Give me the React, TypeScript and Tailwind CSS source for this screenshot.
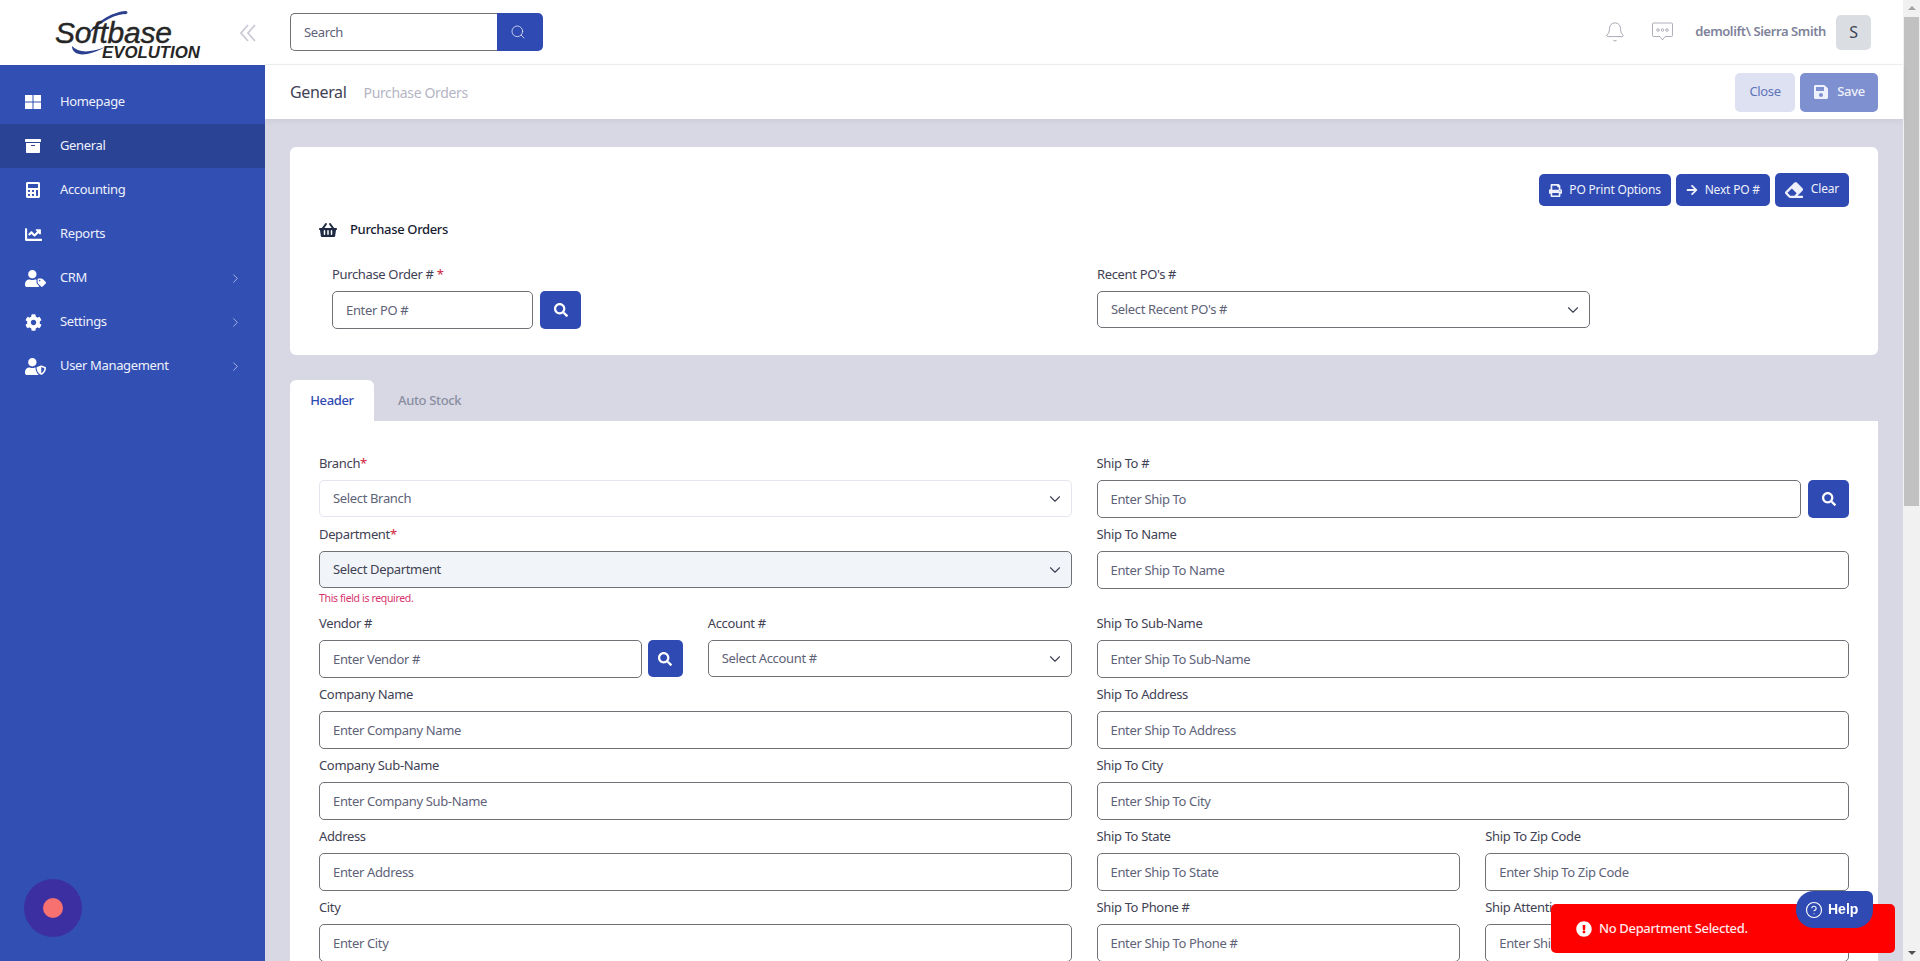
import { Bell, ChevronDown, ChevronRight, CircleHelp, Search } from "lucide-react";
import {
  FaArchive,
  FaArrowRight,
  FaCalculator,
  FaChartLine,
  FaCog,
  FaEraser,
  FaExclamationCircle,
  FaPrint,
  FaSave,
  FaSearch,
  FaShoppingBasket,
  FaUserShield,
  FaUserTag,
} from "react-icons/fa";
import type { ReactNode } from "react";

const HomeIcon = () => (
  <svg width="16" height="14" viewBox="0 0 16 14" fill="currentColor">
    <rect x="0" y="0" width="7.5" height="6.5" />
    <rect x="8.5" y="0" width="7.5" height="6.5" />
    <rect x="0" y="7.5" width="7.5" height="6.5" />
    <rect x="8.5" y="7.5" width="7.5" height="6.5" />
  </svg>
);

const menu = [
  { label: "Homepage", icon: <HomeIcon /> },
  { label: "General", icon: <FaArchive size={16} />, active: true },
  { label: "Accounting", icon: <FaCalculator size={16} /> },
  { label: "Reports", icon: <FaChartLine size={17} /> },
  { label: "CRM", icon: <FaUserTag size={21} />, more: true },
  { label: "Settings", icon: <FaCog size={17} />, more: true },
  { label: "User Management", icon: <FaUserShield size={21} />, more: true },
];

const Logo = () => (
  <div className="relative h-[65px] w-[239px] shrink-0">
    <svg className="absolute left-0 top-0" width="225" height="65" viewBox="0 0 225 65" fill="none">
      <path d="M86 37 C94 24 110 12 126 11 C129 12 127 15 124 14 C110 16 98 24 86 37 Z" fill="#2b3f8f" />
      <path d="M72 46 C72 57 88 57 105 47 C90 53 78 53 72 46 Z" fill="#2b3f8f" />
    </svg>
    <span className="absolute left-[55px] top-[20px] font-['Liberation_Sans',sans-serif] text-[30px] italic leading-[26px] tracking-[-0.2px] text-[#262626] [-webkit-text-stroke:0.4px_#262626]">
      Softbase
    </span>
    <span className="absolute left-[102px] top-[47px] font-['Liberation_Sans',sans-serif] text-[16.8px] font-bold italic leading-[12px] tracking-normal text-[#262626]">
      EVOLUTION
    </span>
  </div>
);

const Sidebar = () => (
  <aside className="flex w-[265px] shrink-0 flex-col bg-[#324fb4]">
    <div className="flex h-[65px] items-center bg-white">
      <Logo />
      <svg width="18" height="18" viewBox="0 0 18 18" fill="none" stroke="#c9cad6" strokeWidth="1.8">
        <path d="M9 1 L2 9 L9 17" />
        <path d="M16 1 L9 9 L16 17" />
      </svg>
    </div>
    <nav className="flex flex-1 flex-col pt-[15px]">
      {menu.map((item) => (
        <div
          key={item.label}
          className={
            item.active
              ? "flex h-11 items-center bg-[#2b4394] pl-[25px] pr-[22px] text-[13px] text-[#eef1fb]"
              : "flex h-11 items-center pl-[25px] pr-[22px] text-[13px] text-[#eef1fb]"
          }
        >
          <span className="flex w-[35px] text-white">{item.icon}</span>
          <span className="flex-1">{item.label}</span>
          {item.more && <ChevronRight size={15} strokeWidth={1.5} className="text-[#aab6e4]" />}
        </div>
      ))}
    </nav>
    <div className="mb-6 ml-6 flex h-[58px] w-[58px] items-center justify-center rounded-full bg-[#3c2fa2]">
      <div className="h-5 w-5 rounded-full bg-[#f87171]" />
    </div>
  </aside>
);

const SearchButton = () => (
  <button className="flex h-[37px] w-[35px] shrink-0 items-center justify-center rounded-[5px] bg-[#2f4ab2] text-white">
    <FaSearch size={14} />
  </button>
);

const Field = ({ label, req, children }: { label: string; req?: boolean; children: ReactNode }) => (
  <div className="min-w-0 flex-1 pb-[6px]">
    <div className="mb-[7px] h-5 text-[13px] leading-5 text-[#3f4254]">
      {label}
      {req && <span className="text-[#d1213b]">*</span>}
    </div>
    {children}
  </div>
);

const Input = ({ placeholder }: { placeholder: string }) => (
  <div className="flex h-[38px] flex-1 items-center rounded-[5px] border border-[#6e7176] bg-white px-[13px] pt-px text-[13px] text-[#5e6278]">
    {placeholder}
  </div>
);

const Select = ({ placeholder, variant }: { placeholder: string; variant?: "light" | "filled" }) => {
  let cls =
    "flex h-[37px] flex-1 items-center justify-between rounded-[5px] border border-[#6e7176] bg-white pl-[13px] pr-[7px] text-[13px] text-[#5e6278]";
  if (variant === "light") {
    cls =
      "flex h-[37px] flex-1 items-center justify-between rounded-[5px] border border-[#e4e6ef] bg-white pl-[13px] pr-[7px] text-[13px] text-[#5e6278]";
  }
  if (variant === "filled") {
    cls =
      "flex h-[37px] flex-1 items-center justify-between rounded-[5px] border border-[#6e7176] bg-[#f1f4f8] pl-[13px] pr-[7px] text-[13px] text-[#3f4254]";
  }
  return (
    <div className={cls}>
      <span>{placeholder}</span>
      <ChevronDown size={18} strokeWidth={1.5} className="text-[#3f4254]" />
    </div>
  );
};

const TextField = ({ label, placeholder }: { label: string; placeholder: string }) => (
  <Field label={label}>
    <div className="flex">
      <Input placeholder={placeholder} />
    </div>
  </Field>
);

const HeaderForm = () => (
  <div className="bg-white px-[29px] pt-8">
    <div className="grid grid-cols-2 gap-x-[25px]">
      <Field label="Branch" req>
        <div className="flex">
          <Select placeholder="Select Branch" variant="light" />
        </div>
      </Field>
      <Field label="Ship To #">
        <div className="flex gap-[7px]">
          <Input placeholder="Enter Ship To" />
          <button className="flex h-[38px] w-[41px] shrink-0 items-center justify-center rounded-[5px] bg-[#2f4ab2] text-white">
            <FaSearch size={14} />
          </button>
        </div>
      </Field>

      <div className="pb-2">
        <Field label="Department" req>
          <div className="flex">
            <Select placeholder="Select Department" variant="filled" />
          </div>
        </Field>
        <div className="-mt-[3px] h-[14px] text-[10.5px] leading-[14px] text-[#d6336c]">This field is required.</div>
      </div>
      <TextField label="Ship To Name" placeholder="Enter Ship To Name" />

      <div className="flex gap-[25px]">
        <Field label="Vendor #">
          <div className="flex gap-[6px]">
            <Input placeholder="Enter Vendor #" />
            <SearchButton />
          </div>
        </Field>
        <Field label="Account #">
          <div className="flex">
            <Select placeholder="Select Account #" />
          </div>
        </Field>
      </div>
      <TextField label="Ship To Sub-Name" placeholder="Enter Ship To Sub-Name" />

      <TextField label="Company Name" placeholder="Enter Company Name" />
      <TextField label="Ship To Address" placeholder="Enter Ship To Address" />

      <TextField label="Company Sub-Name" placeholder="Enter Company Sub-Name" />
      <TextField label="Ship To City" placeholder="Enter Ship To City" />

      <TextField label="Address" placeholder="Enter Address" />
      <div className="flex gap-[25px]">
        <TextField label="Ship To State" placeholder="Enter Ship To State" />
        <TextField label="Ship To Zip Code" placeholder="Enter Ship To Zip Code" />
      </div>

      <TextField label="City" placeholder="Enter City" />
      <div className="flex gap-[25px]">
        <TextField label="Ship To Phone #" placeholder="Enter Ship To Phone #" />
        <TextField label="Ship Attention" placeholder="Enter Ship Attention" />
      </div>
    </div>
  </div>
);

const Main = () => (
  <main className="flex min-w-0 flex-1 flex-col">
    <header className="flex h-[65px] shrink-0 items-center border-b border-[#eff0f4] bg-white pl-[25px] pr-8">
      <div className="flex h-[38px] w-[253px]">
        <div className="flex flex-1 items-center rounded-l-[5px] border border-r-0 border-[#6e7176] pl-[13px] pt-px text-[13px] text-[#5e6278]">
          Search
        </div>
        <div className="flex w-[46px] items-center justify-center rounded-r-[5px] bg-[#2f4ab2] pr-1 text-[#dfe4f6]">
          <Search size={16} strokeWidth={1.25} />
        </div>
      </div>
      <div className="ml-auto flex items-center">
        <Bell size={22} strokeWidth={0.8} className="text-[#8a8d99]" />
        <svg className="ml-[26px]" width="21" height="20" viewBox="0 0 21 20" fill="none" stroke="#9a9da8" strokeWidth="0.8">
          <path d="M1.5 1 H19.5 A1 1 0 0 1 20.5 2 V13.5 A1 1 0 0 1 19.5 14.5 H13 L10.5 18 L8 14.5 H1.5 A1 1 0 0 1 0.5 13.5 V2 A1 1 0 0 1 1.5 1 Z" />
          <circle cx="6" cy="8" r="1.3" />
          <circle cx="10.5" cy="8" r="1.3" />
          <circle cx="15" cy="8" r="1.3" />
        </svg>
        <span className="ml-[22px] text-[13px] font-semibold tracking-[-0.4px] text-[#7e8299]">demolift\ Sierra Smith</span>
        <div className="ml-[10px] flex h-[35px] w-[35px] items-center justify-center rounded-[5px] bg-[#dadee3] text-[16px] text-[#3f4254]">
          S
        </div>
      </div>
    </header>

    <div className="z-10 flex h-[54px] shrink-0 items-center bg-white pl-[25px] pr-[25px] shadow-[0_2px_6px_rgba(60,60,90,0.08)]">
      <span className="text-[16px] text-[#3f4254]">General</span>
      <span className="ml-[17px] text-[14px] text-[#b5b5c3]">Purchase Orders</span>
      <button className="ml-auto flex h-[39px] w-[60px] items-center justify-center rounded-[5px] bg-[#dde1f2] text-[13px] text-[#5f74b8]">
        Close
      </button>
      <button className="ml-[5px] flex h-[39px] w-[78px] items-center justify-center gap-2 rounded-[5px] bg-[#7e90cf] text-[13px] font-medium text-[#eef1fb]">
        <FaSave size={16} />
        Save
      </button>
    </div>

    <div className="min-h-0 flex-1 overflow-hidden bg-[#d7d8e4] px-[25px] pt-7">
      <section className="rounded-[6px] bg-white px-[29px] pb-[26px] pt-[26px]">
        <div className="flex items-center justify-end gap-[5px]">
          <button className="flex h-8 items-center gap-[7px] rounded-[5px] bg-[#2f4ab2] px-[10px] text-[12px] tracking-[-0.2px] text-[#eef1fb]">
            <FaPrint size={13} />
            PO Print Options
          </button>
          <button className="flex h-8 items-center gap-[7px] rounded-[5px] bg-[#2f4ab2] px-[10px] text-[12px] tracking-[-0.2px] text-[#eef1fb]">
            <FaArrowRight size={12} />
            Next PO #
          </button>
          <button className="flex h-[34px] items-center gap-[8px] rounded-[5px] bg-[#2f4ab2] px-[10px] text-[12px] tracking-[-0.2px] text-[#eef1fb]">
            <FaEraser size={18} />
            <span className="-mt-[2px]">Clear</span>
          </button>
        </div>
        <div className="mt-3 flex h-[22px] items-center gap-[13px] text-[13px] font-medium text-[#181c32]">
          <FaShoppingBasket size={18} className="text-[#1e2a44]" />
          Purchase Orders
        </div>
        <div className="mt-[23px] flex">
          <div className="w-[778px] pl-[13px]">
            <div className="mb-[7px] h-5 text-[13px] leading-5 text-[#3f4254]">
              Purchase Order # <span className="text-[#d1213b]">*</span>
            </div>
            <div className="flex gap-[7px]">
              <div className="flex h-[38px] w-[201px] items-center rounded-[5px] border border-[#6e7176] pl-[13px] pt-px text-[13px] text-[#5e6278]">
                Enter PO #
              </div>
              <button className="flex h-[38px] w-[41px] items-center justify-center rounded-[5px] bg-[#2f4ab2] text-white">
                <FaSearch size={14} />
              </button>
            </div>
          </div>
          <div className="w-[493px]">
            <div className="mb-[7px] h-5 text-[13px] leading-5 text-[#3f4254]">Recent PO's #</div>
            <div className="flex">
              <Select placeholder="Select Recent PO's #" />
            </div>
          </div>
        </div>
      </section>

      <div className="mt-[25px] flex h-[41px] items-center text-[13px] font-medium">
        <div className="flex h-full w-[84px] items-center justify-center rounded-t-[6px] bg-white text-[#2f4ab2]">Header</div>
        <div className="ml-6 text-[#8a8da0]">Auto Stock</div>
      </div>
      <HeaderForm />
    </div>
  </main>
);

const Scrollbar = () => (
  <div className="flex w-[17px] shrink-0 flex-col items-center bg-[#f1f1f1]">
    <div className="mt-[6px] h-0 w-0 border-x-[4px] border-b-[4px] border-x-transparent border-b-[#a3a3a3]" />
    <div className="mt-[7px] h-[489px] w-[15px] bg-[#c1c1c1]" />
    <div className="mt-auto mb-[6px] h-0 w-0 border-x-[4px] border-t-[4px] border-x-transparent border-t-[#505050]" />
  </div>
);

export default function App() {
  return (
    <div className="flex h-screen w-full overflow-hidden bg-white font-['Noto_Sans',sans-serif] tracking-[-0.35px]">
      <Sidebar />
      <Main />
      <Scrollbar />
      {/* toast and help float over the form */}
      <div className="fixed left-[1551px] top-[904px] flex h-[49px] w-[344px] items-center rounded-[5px] bg-[#ff0000] pl-[25px] text-[13px] font-medium text-[#ffe9e9]">
        <FaExclamationCircle size={16} className="text-white" />
        <span className="ml-[7px]">No Department Selected.</span>
      </div>
      <div className="fixed left-[1796px] top-[891px] flex h-[37px] w-[77px] items-center gap-[5px] rounded-[18px] rounded-tr-[6px] bg-[#2f4ab2] pl-[9px] font-['Liberation_Sans',sans-serif] text-[14px] font-bold tracking-normal text-white">
        <CircleHelp size={18} strokeWidth={1.5} />
        Help
      </div>
    </div>
  );
}
